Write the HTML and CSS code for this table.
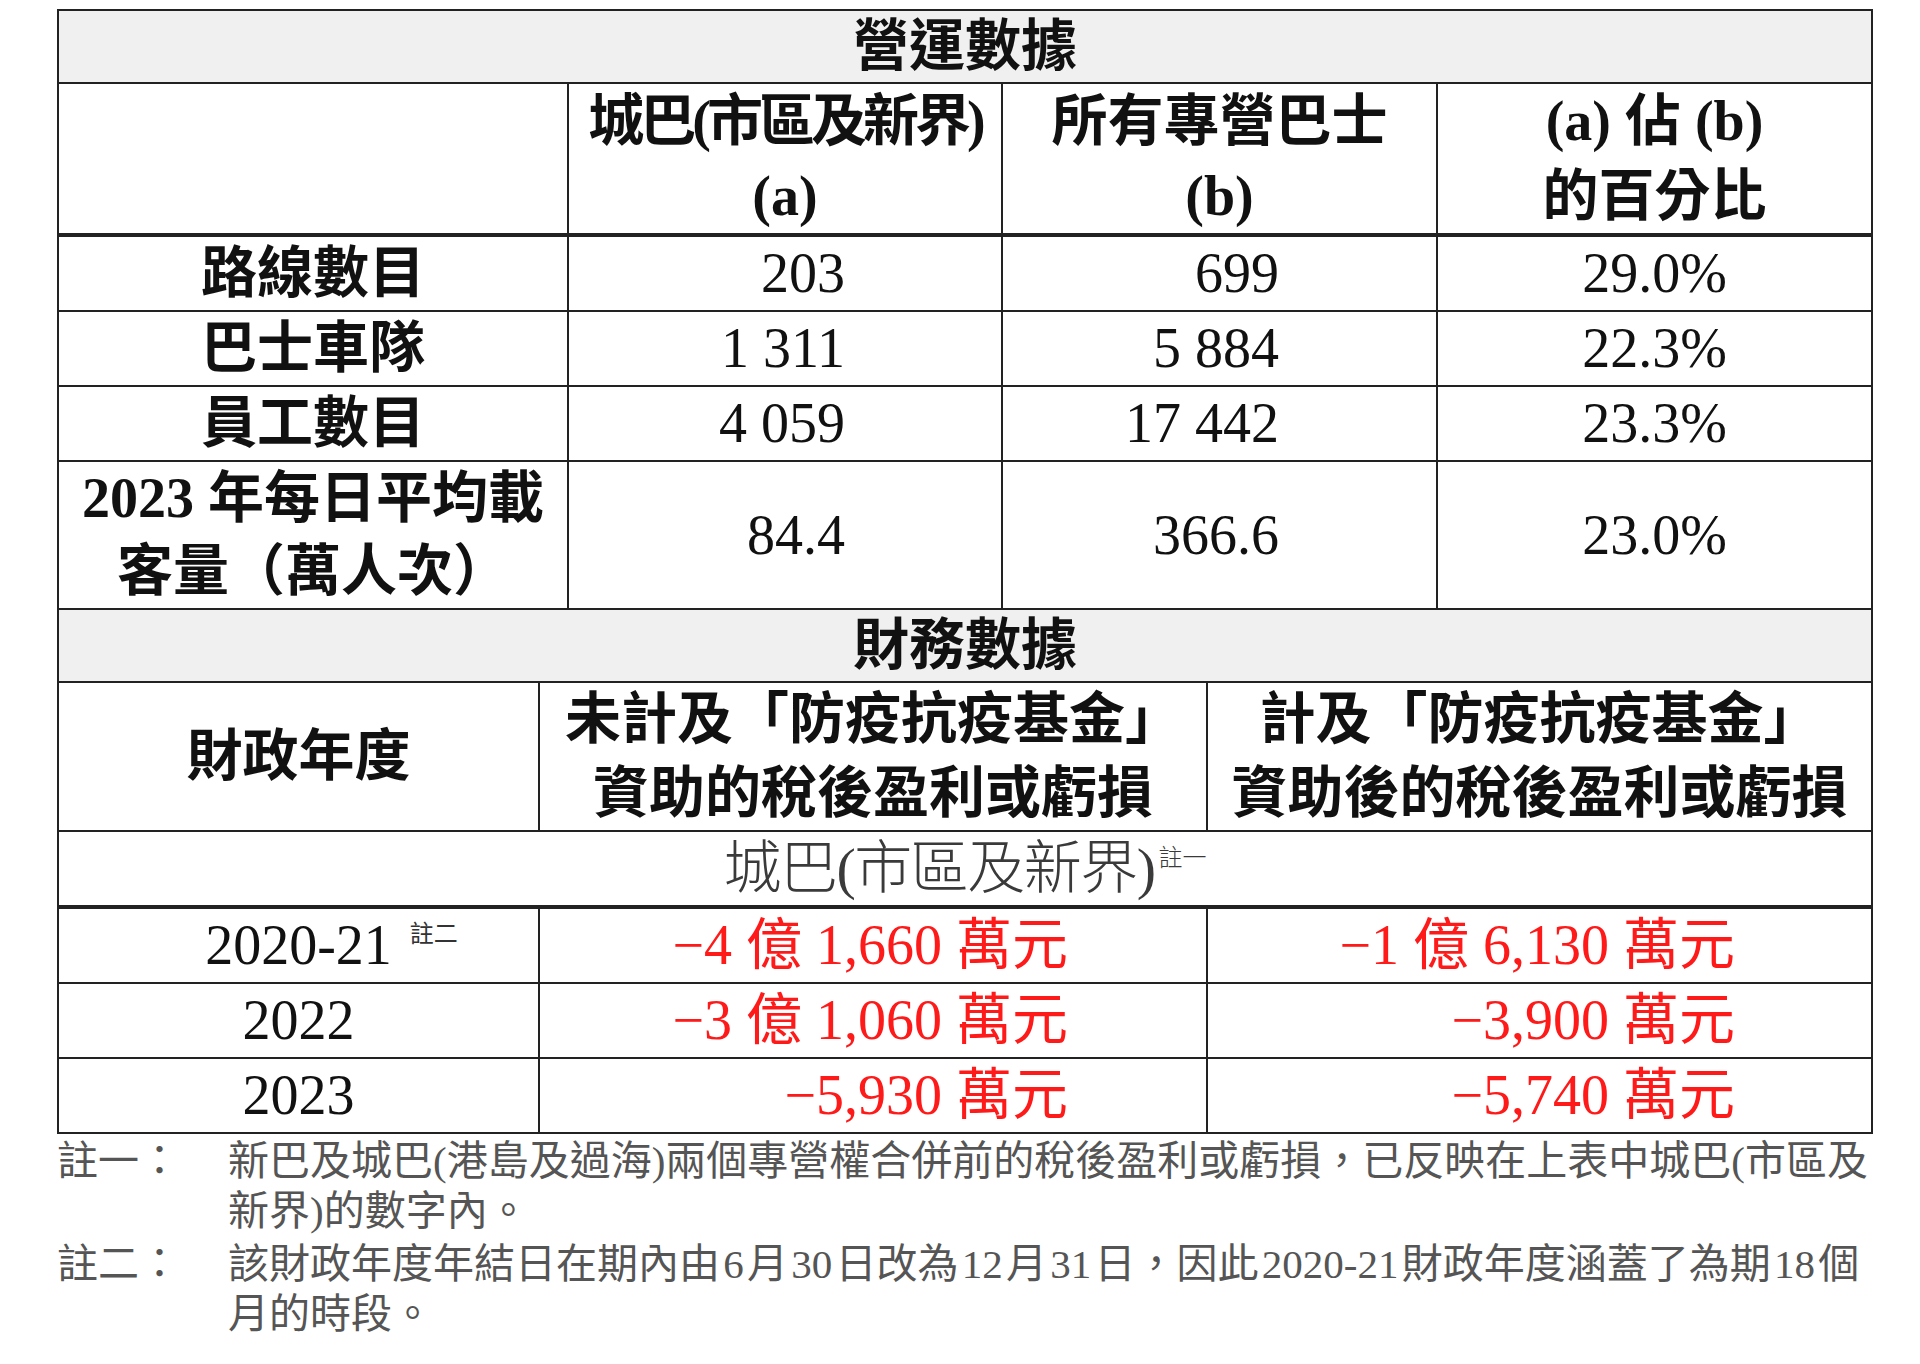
FILE: index.html
```html
<!DOCTYPE html>
<html lang="zh-Hant">
<head>
<meta charset="utf-8">
<title>營運數據及財務數據</title>
<link rel="stylesheet" href="styles.css">
</head>
<body>
<div class="sheet">
  <table class="ops">
    <colgroup>
      <col class="w-label">
      <col class="w-a">
      <col class="w-b">
      <col class="w-pct">
    </colgroup>
    <tr><td colspan="4" class="band">營運數據</td></tr>
    <tr class="head">
      <td></td>
      <td><span class="tight">城巴(市區及新界)</span><br>(a)</td>
      <td>所有專營巴士<br>(b)</td>
      <td>(a) 佔 (b)<br>的百分比</td>
    </tr>
    <tr>
      <td class="label">路線數目</td>
      <td class="num-a">203</td>
      <td class="num-b">699</td>
      <td class="pct">29.0%</td>
    </tr>
    <tr>
      <td class="label">巴士車隊</td>
      <td class="num-a">1 311</td>
      <td class="num-b">5 884</td>
      <td class="pct">22.3%</td>
    </tr>
    <tr>
      <td class="label">員工數目</td>
      <td class="num-a">4 059</td>
      <td class="num-b">17 442</td>
      <td class="pct">23.3%</td>
    </tr>
    <tr>
      <td class="label">2023 年每日平均載<br>客量（萬人次）</td>
      <td class="num-a">84.4</td>
      <td class="num-b">366.6</td>
      <td class="pct">23.0%</td>
    </tr>
  </table>

  <table class="fin">
    <colgroup>
      <col class="w-year">
      <col class="w-excl">
      <col class="w-incl">
    </colgroup>
    <tr><td colspan="3" class="band">財務數據</td></tr>
    <tr class="fhead">
      <td>財政年度</td>
      <td>未計及「防疫抗疫基金」<br>資助的稅後盈利或虧損</td>
      <td>計及「防疫抗疫基金」<br>資助後的稅後盈利或虧損</td>
    </tr>
    <tr class="sub">
      <td colspan="3" class="company">城巴(市區及新界)<sup class="fn">註一</sup></td>
    </tr>
    <tr>
      <td class="year"><span class="yr">2020-21<sup class="fn-abs">註二</sup></span></td>
      <td class="loss-a">−4 億 1,660 萬元</td>
      <td class="loss-b">−1 億 6,130 萬元</td>
    </tr>
    <tr>
      <td class="year">2022</td>
      <td class="loss-a">−3 億 1,060 萬元</td>
      <td class="loss-b">−3,900 萬元</td>
    </tr>
    <tr>
      <td class="year">2023</td>
      <td class="loss-a">−5,930 萬元</td>
      <td class="loss-b">−5,740 萬元</td>
    </tr>
  </table>

  <div class="notes">
    <div class="note">
      <div class="note-label">註一：</div>
      <div class="note-text">新巴及城巴(港島及過海)兩個專營權合併前的稅後盈利或虧損，已反映在上表中城巴(市區及<br>新界)的數字內。</div>
    </div>
    <div class="note">
      <div class="note-label">註二：</div>
      <div class="note-text">該財政年度年結日在期內由 6 月 30 日改為 12 月 31 日，因此 2020-21 財政年度涵蓋了為期 18 個<br>月的時段。</div>
    </div>
  </div>
</div>
</body>
</html>
```

FILE: styles.css
```css
html, body {
  margin: 0;
  padding: 0;
  background: #ffffff;
}

.sheet {
  width: 1814px;
  margin: 9px 0 0 57px;
  font-family: "Liberation Serif", "Noto Sans CJK TC", serif;
  color: #111111;
}

table {
  width: 1814px;
  border-collapse: collapse;
  table-layout: fixed;
}

td {
  border: 2px solid #222222;
  padding: 0 6px;
  font-size: 56px;
  line-height: 73px;
  text-align: center;
  vertical-align: middle;
  white-space: nowrap;
}

.w-label { width: 510px; }
.w-a { width: 434px; }
.w-b { width: 435px; }
.w-pct { width: 435px; }

.w-year { width: 481px; }
.w-excl { width: 668px; }
.w-incl { width: 665px; }

.band {
  background: #f0f0f0;
  font-weight: 700;
  line-height: 71px;
}

.head td,
.fhead td {
  font-weight: 700;
}

.head td {
  border-bottom-width: 4px;
  line-height: 74.5px;
}

.fhead td {
  line-height: 73.5px;
}

.tight {
  letter-spacing: -4px;
}

.label {
  font-weight: 700;
}

.num-a {
  text-align: right;
  padding-right: 156px;
}

.num-b {
  text-align: right;
  padding-right: 157px;
}

.pct {
  text-align: center;
}

/* financial table */
.fin tr:first-child td {
  border-top: 0;
}

.company {
  font-size: 58px;
  letter-spacing: -1.5px;
  color: #3a3a3a;
  font-weight: 300;
}

.sub td {
  border-bottom-width: 4px;
}

.fn {
  font-size: 24px;
  line-height: 1;
  letter-spacing: 0;
  vertical-align: 22px;
  margin-left: 4px;
  color: #3a3a3a;
}

.year {
  color: #111111;
}

.yr {
  position: relative;
}

.fn-abs {
  position: absolute;
  left: 100%;
  top: 8px;
  margin-left: 18px;
  font-size: 24px;
  line-height: 1;
  color: #333333;
}

.loss-a,
.loss-b {
  color: #ff1a1a;
  text-align: right;
}

.loss-a {
  padding-right: 138px;
}

.loss-b {
  padding-right: 136px;
}

/* notes */
.notes {
  margin-top: 2px;
  color: #555555;
  font-size: 41px;
  line-height: 50px;
}

.note {
  display: flex;
  margin-bottom: 3px;
}

.note-label {
  width: 171px;
  flex: none;
}

.note-text {
  white-space: nowrap;
  word-spacing: -7px;
}
```
